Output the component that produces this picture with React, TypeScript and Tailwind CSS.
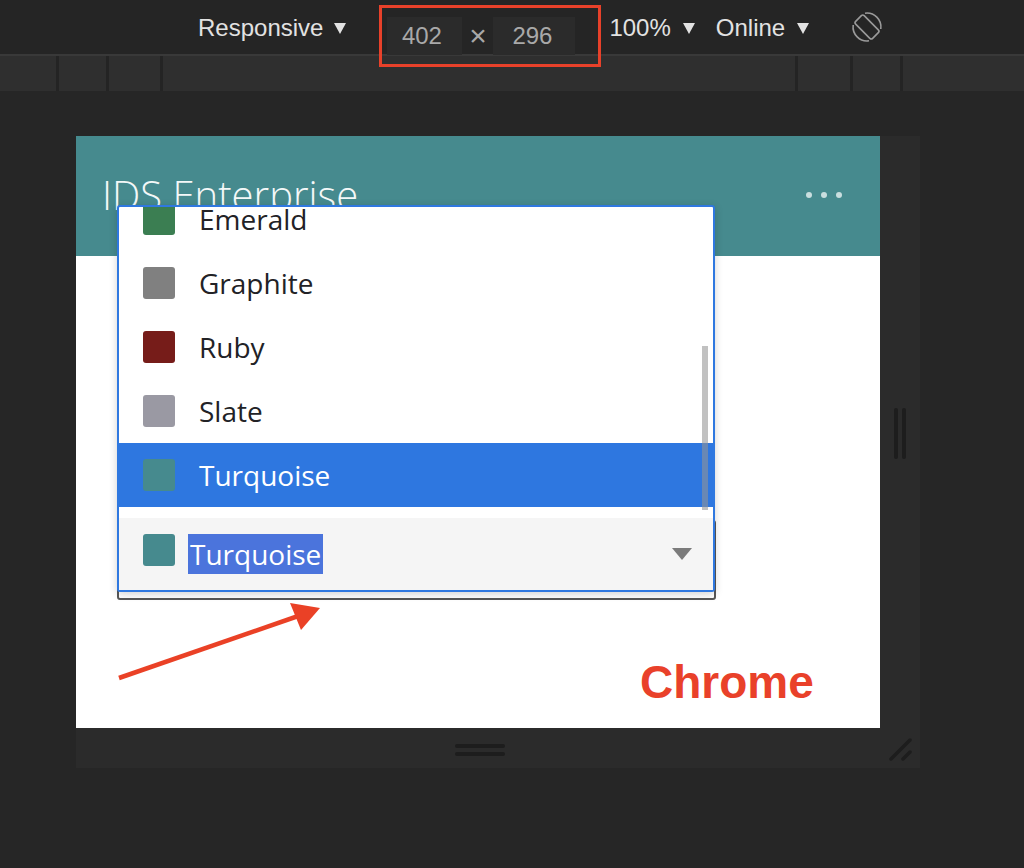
const swatches = [
  { name: 'Emerald', color: '#3b7e52' },
  { name: 'Graphite', color: '#808080' },
  { name: 'Ruby', color: '#761c19' },
  { name: 'Slate', color: '#9a99a3' },
  { name: 'Turquoise', color: '#468a8e' },
]

function Caret({ className }: { className?: string }) {
  return (
    <svg width="12" height="11" viewBox="0 0 12 11" className={className}>
      <path d="M0 0h12L6 11z" fill="currentColor" />
    </svg>
  )
}

function RotateIcon() {
  return (
    <svg width="32" height="32" viewBox="0 0 32 32" fill="none" stroke="#9a9a9a" strokeWidth="1.6">
      <rect x="10" y="4" width="12" height="24" rx="2" transform="rotate(-45 16 16)" />
      <path d="M14 2.2A14 14 0 0 1 29.8 18" />
      <path d="M18 29.8A14 14 0 0 1 2.2 14" />
    </svg>
  )
}

export default function App() {
  return (
    <div className="w-[1024px] h-[868px] overflow-hidden bg-[#262626]" style={{ fontFamily: '"Liberation Sans", Arial, sans-serif' }}>
      {/* devtools toolbar */}
      <div className="h-[54px] bg-[#252525] flex items-center text-[24px] text-[#e2e2e2]">
        <div className="ml-[198px] flex items-center pt-[2px]">
          <span>Responsive</span>
          <Caret className="ml-[11px] mt-[1px]" />
        </div>
        <div className="ml-[33px] h-[62px] w-[222px] border-[3px] border-[#e8412a] flex items-center self-start mt-[5px]">
          <div className="ml-[5px] w-[75px] h-[38px] bg-[#2b2b2b] flex items-center justify-center text-[#a9a9a9] pr-[6px]">402</div>
          <div className="w-[31px] text-center text-[#a9a9a9] text-[30px] leading-none">×</div>
          <div className="w-[82px] h-[38px] bg-[#2b2b2b] flex items-center justify-center text-[#a9a9a9] pr-[4px]">296</div>
        </div>
        <div className="ml-[8px] flex items-center pt-[2px]">
          <span>100%</span>
          <Caret className="ml-[12px] mt-[1px]" />
        </div>
        <div className="ml-[21px] flex items-center pt-[2px]">
          <span>Online</span>
          <Caret className="ml-[12px] mt-[1px]" />
        </div>
        <div className="ml-[42px] flex items-center">
          <RotateIcon />
        </div>
      </div>
      <div className="h-[2px] bg-[#393939]" />
      <div className="h-[35px] bg-[#2f2f2f] flex">
        <div className="w-[56px]" />
        <div className="w-[3px] bg-[#242424]" />
        <div className="w-[47px]" />
        <div className="w-[3px] bg-[#242424]" />
        <div className="w-[51px]" />
        <div className="w-[3px] bg-[#242424]" />
        <div className="w-[632px]" />
        <div className="w-[3px] bg-[#242424]" />
        <div className="w-[52px]" />
        <div className="w-[3px] bg-[#242424]" />
        <div className="w-[47px]" />
        <div className="w-[3px] bg-[#242424]" />
      </div>

      {/* device frame */}
      <div className="mt-[45px] ml-[76px] w-[844px] bg-[#2b2b2b]">
        <div className="flex">
          <div className="relative w-[804px] h-[592px] bg-white overflow-hidden" style={{ fontFamily: '"Open Sans", "Noto Sans", sans-serif' }}>
            <div className="h-[120px] bg-[#468a8e] flex items-start justify-between">
              <div className="mt-[39px] ml-[26px] text-[40px] leading-none font-light text-[#f4f8f8]">IDS Enterprise</div>
              <div className="mt-[56px] mr-[38px] flex gap-[9px]">
                <span className="w-[6px] h-[6px] rounded-full bg-[#c9dedf]" />
                <span className="w-[6px] h-[6px] rounded-full bg-[#c9dedf]" />
                <span className="w-[6px] h-[6px] rounded-full bg-[#c9dedf]" />
              </div>
            </div>

            {/* underlying select */}
            <div className="mt-[264px] ml-[41px] w-[599px] h-[80px] border-2 border-[#575757] rounded-[3px]" />

            {/* open dropdown */}
            <div className="absolute left-[41px] top-[69px] w-[598px] border-2 border-[#2f78e0] rounded-[3px] bg-white shadow-[0_2px_8px_rgba(0,0,0,0.18)]">
              <div className="relative h-[311px] overflow-hidden">
                <div className="-mt-[20px]">
                  {swatches.map((s, i) => {
                    const selected = i === swatches.length - 1
                    return (
                      <div
                        key={s.name}
                        className={`h-[64px] flex items-center pl-[24px] gap-[24px] text-[28px] ${selected ? 'bg-[#2e77e0] text-white' : 'text-[#222226]'}`}
                      >
                        <span className="w-[32px] h-[32px] rounded-[3px]" style={{ backgroundColor: s.color }} />
                        <span>{s.name}</span>
                      </div>
                    )
                  })}
                </div>
                <div className="absolute right-[5px] top-[139px] w-[6px] h-[164px] bg-[rgba(149,149,149,0.58)]" />
              </div>
              <div className="h-[72px] bg-[#f5f5f5] flex items-center pl-[24px] pr-[21px]">
                <span className="self-start mt-[16px] w-[32px] h-[32px] rounded-[3px] bg-[#468a8e]" />
                <span className="ml-[13px] px-[2px] h-[40px] leading-[40px] bg-[#4b74dc] text-white text-[28px]">Turquoise</span>
                <svg width="20" height="12" viewBox="0 0 20 12" className="ml-auto mt-[-1px]">
                  <path d="M0 0h20L10 12z" fill="#7b7b7b" />
                </svg>
              </div>
            </div>

            {/* annotation */}
            <svg className="absolute left-0 top-0" width="804" height="592" viewBox="0 0 804 592">
              <line x1="43" y1="542" x2="228" y2="478" stroke="#ea4126" strokeWidth="4.5" />
              <path d="M244 472L214 467L225 494Z" fill="#ea4126" />
            </svg>
            <div
              className="absolute left-[564px] top-[523px] text-[46px] leading-none font-bold text-[#e9412a]"
              style={{ fontFamily: '"Liberation Sans", Arial, sans-serif' }}
            >
              Chrome
            </div>
          </div>
          <div className="w-[40px] flex items-center justify-center gap-[4px]">
            <span className="w-[4px] h-[51px] rounded-full bg-[#1d1d1d] mt-[3px]" />
            <span className="w-[4px] h-[51px] rounded-full bg-[#1d1d1d] mt-[3px]" />
          </div>
        </div>
        <div className="relative h-[40px] flex flex-col items-center justify-center gap-[4px]">
          <span className="w-[50px] h-[4px] rounded-full bg-[#1d1d1d] -ml-[36px] mt-[4px]" />
          <span className="w-[50px] h-[4px] rounded-full bg-[#1d1d1d] -ml-[36px]" />
          <svg className="absolute right-[8px] top-[8px]" width="24" height="26" viewBox="0 0 24 26">
            <path d="M3 23L22 4M15 23L22 16" stroke="#1d1d1d" strokeWidth="3.5" strokeLinecap="round" />
          </svg>
        </div>
      </div>
    </div>
  )
}
